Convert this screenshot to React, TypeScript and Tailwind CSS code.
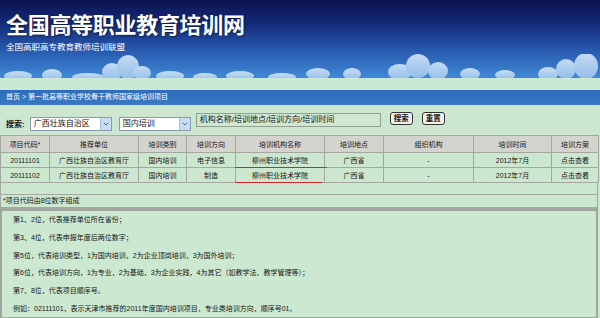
import { ChevronDown } from 'lucide-react';

const columns = [
  { label: '项目代码*', w: 'w-[49px]' },
  { label: '推荐单位', w: 'w-[89px]' },
  { label: '培训类别', w: 'w-[48px]' },
  { label: '培训方向', w: 'w-[49px]' },
  { label: '培训机构名称', w: 'w-[89px]' },
  { label: '培训地点', w: 'w-[59px]' },
  { label: '组织机构', w: 'w-[90px]' },
  { label: '培训时间', w: 'w-[78px]' },
  { label: '培训方案', w: 'w-[47px]' },
];

const rows = [
  ['20111101', '广西壮族自治区教育厅', '国内培训', '电子信息', '柳州职业技术学院', '广西省', '-', '2012年7月', '点击查看'],
  ['20111102', '广西壮族自治区教育厅', '国内培训', '制造', '柳州职业技术学院', '广西省', '-', '2012年7月', '点击查看'],
];

const notes = [
  '第1、2位，代表推荐单位所在省份；',
  '第3、4位，代表申报年度后两位数字；',
  '第5位，代表培训类型，1为国内培训，2为企业顶岗培训，3为国外培训；',
  '第6位，代表培训方向，1为专业，2为基础，3为企业实践，4为其它（如教学法、教学管理等）；',
  '第7、8位，代表项目顺序号。',
  '例如：02111101，表示天津市推荐的2011年度国内培训项目，专业类培训方向，顺序号01。',
];

function Clouds() {
  return (
    <svg className="absolute left-0 bottom-0" width="600" height="24" viewBox="0 0 600 24">
      <defs>
        <linearGradient id="cloud" x1="0" y1="0" x2="0" y2="1">
          <stop offset="0" stopColor="#d6e8fa" />
          <stop offset="1" stopColor="#9cc4ee" />
        </linearGradient>
      </defs>
      <g fill="url(#cloud)" opacity="0.9">
        <ellipse cx="18" cy="22" rx="14" ry="5" />
        <ellipse cx="52" cy="21" rx="10" ry="6" />
        <ellipse cx="88" cy="23" rx="16" ry="4" />
        <ellipse cx="112" cy="18" rx="10" ry="9" />
        <ellipse cx="128" cy="13" rx="11" ry="12" />
        <ellipse cx="142" cy="19" rx="9" ry="7" />
        <ellipse cx="170" cy="22" rx="14" ry="5" />
        <ellipse cx="205" cy="23" rx="12" ry="4" />
        <ellipse cx="240" cy="22" rx="14" ry="5" />
        <ellipse cx="282" cy="23" rx="14" ry="4" />
        <ellipse cx="318" cy="20" rx="12" ry="6" />
        <ellipse cx="352" cy="20" rx="9" ry="6" />
        <ellipse cx="400" cy="18" rx="12" ry="8" />
        <ellipse cx="418" cy="12" rx="12" ry="12" />
        <ellipse cx="438" cy="17" rx="10" ry="9" />
        <ellipse cx="470" cy="20" rx="10" ry="6" />
        <ellipse cx="505" cy="21" rx="10" ry="5" />
        <ellipse cx="548" cy="20" rx="10" ry="7" />
        <ellipse cx="566" cy="15" rx="10" ry="10" />
        <ellipse cx="586" cy="12" rx="12" ry="13" />
      </g>
    </svg>
  );
}

function SelectBox({ value, width }: { value: string; width: string }) {
  return (
    <div className={`${width} h-[14px] flex items-center bg-white border border-[#8a9bb0]`}>
      <span className="flex-1 pl-[3px] text-[8px] leading-none text-[#111]">{value}</span>
      <span className="w-[11px] h-full flex items-center justify-center bg-[#c9dcf5] border-l border-[#a9bfdf]">
        <ChevronDown className="w-[8px] h-[8px] text-[#4a6a9a]" strokeWidth={3} />
      </span>
    </div>
  );
}

export default function App() {
  return (
    <div className="w-[600px] h-[318px] overflow-hidden bg-[#cce6cf] font-['Liberation_Sans','Noto_Sans_CJK_SC',sans-serif] text-[#161616]">
      {/* Header */}
      <div className="relative h-[78px] bg-[linear-gradient(180deg,#0c1452_0%,#142a78_30%,#2656ab_62%,#4089d8_100%)] overflow-hidden">
        <Clouds />
        <div className="relative pl-[6px] pt-[13px]">
          <h1 className="text-[22px] leading-[26px] font-bold text-white tracking-[-0.3px] [text-shadow:1px_1px_2px_rgba(0,0,0,0.5)]">
            全国高等职业教育培训网
          </h1>
          <p className="mt-[4px] text-[8.5px] leading-none text-white">全国高职高专教育教师培训联盟</p>
        </div>
      </div>
      <div className="h-[12px] bg-[#c9e8d6]" />

      {/* Breadcrumb */}
      <div className="h-[15px] flex items-center pl-[6px] bg-[linear-gradient(180deg,#2f6cba,#3a78c4)] text-white text-[7px]">
        首页 &gt; 第一批高等职业学校骨干教师国家级培训项目
      </div>

      {/* Search */}
      <div className="h-[29px] flex items-center pl-[6px] pt-[4px]">
        <span className="text-[8px] font-bold mr-[5px] mt-[6px]">搜索:</span>
        <div className="flex items-center gap-[7px] mt-[4px]">
          <SelectBox value="广西壮族自治区" width="w-[82px]" />
          <SelectBox value="国内培训" width="w-[72px]" />
        </div>
        <div className="ml-[5px] w-[185px] h-[14px] -mt-[4px] flex items-center bg-[#cfe6d2] border border-[#8ea08e] pl-[3px] text-[8px] leading-none">
          机构名称/培训地点/培训方向/培训时间
        </div>
        <div className="flex gap-[9px] ml-[9px] -mt-[6px]">
          <button className="w-[23px] h-[13px] flex items-center justify-center border border-[#333] rounded-[3px] bg-[#f2f2ee] text-[7.5px] font-bold leading-none">搜索</button>
          <button className="w-[23px] h-[13px] flex items-center justify-center border border-[#333] rounded-[3px] bg-[#f2f2ee] text-[7.5px] font-bold leading-none">重置</button>
        </div>
      </div>

      {/* Table */}
      <table className="w-[598px] mt-[1px] border-collapse table-fixed text-[7px]">
        <thead>
          <tr className="h-[17px] bg-[#d5d3cd]">
            {columns.map((c) => (
              <th key={c.label} className={`${c.w} font-normal text-center border border-[#a3a8a0] leading-none`}>
                {c.label}
              </th>
            ))}
          </tr>
        </thead>
        <tbody>
          {rows.map((r, i) => (
            <tr key={i} className="h-[15px] bg-[#cde6cf]">
              {r.map((cell, j) => (
                <td key={j} className="relative text-center border border-[#a3a8a0] leading-none">
                  {cell}
                  {j === 4 && (
                    <span
                      className={`absolute left-[-1px] bottom-[-1px] h-[1.5px] bg-[#d0262a] ${i === 0 ? 'w-[92px]' : 'w-[87px]'}`}
                    />
                  )}
                </td>
              ))}
            </tr>
          ))}
        </tbody>
      </table>

      {/* Notes */}
      <div className="w-[598px] border-x border-b border-[#a3a8a0]">
        <div className="h-[11px]" />
        <div className="h-[14px] border-y border-[#a3a8a0] pl-[2px] flex items-center text-[7px]">*项目代码由8位数字组成</div>
      </div>
      <div className="w-[598px] h-[110px] border-2 border-[#9ea79c] bg-[#cde8d0] pl-[11px] text-[7px] leading-[17.8px]">
        {notes.map((n) => (
          <p key={n}>{n}</p>
        ))}
      </div>
    </div>
  );
}
